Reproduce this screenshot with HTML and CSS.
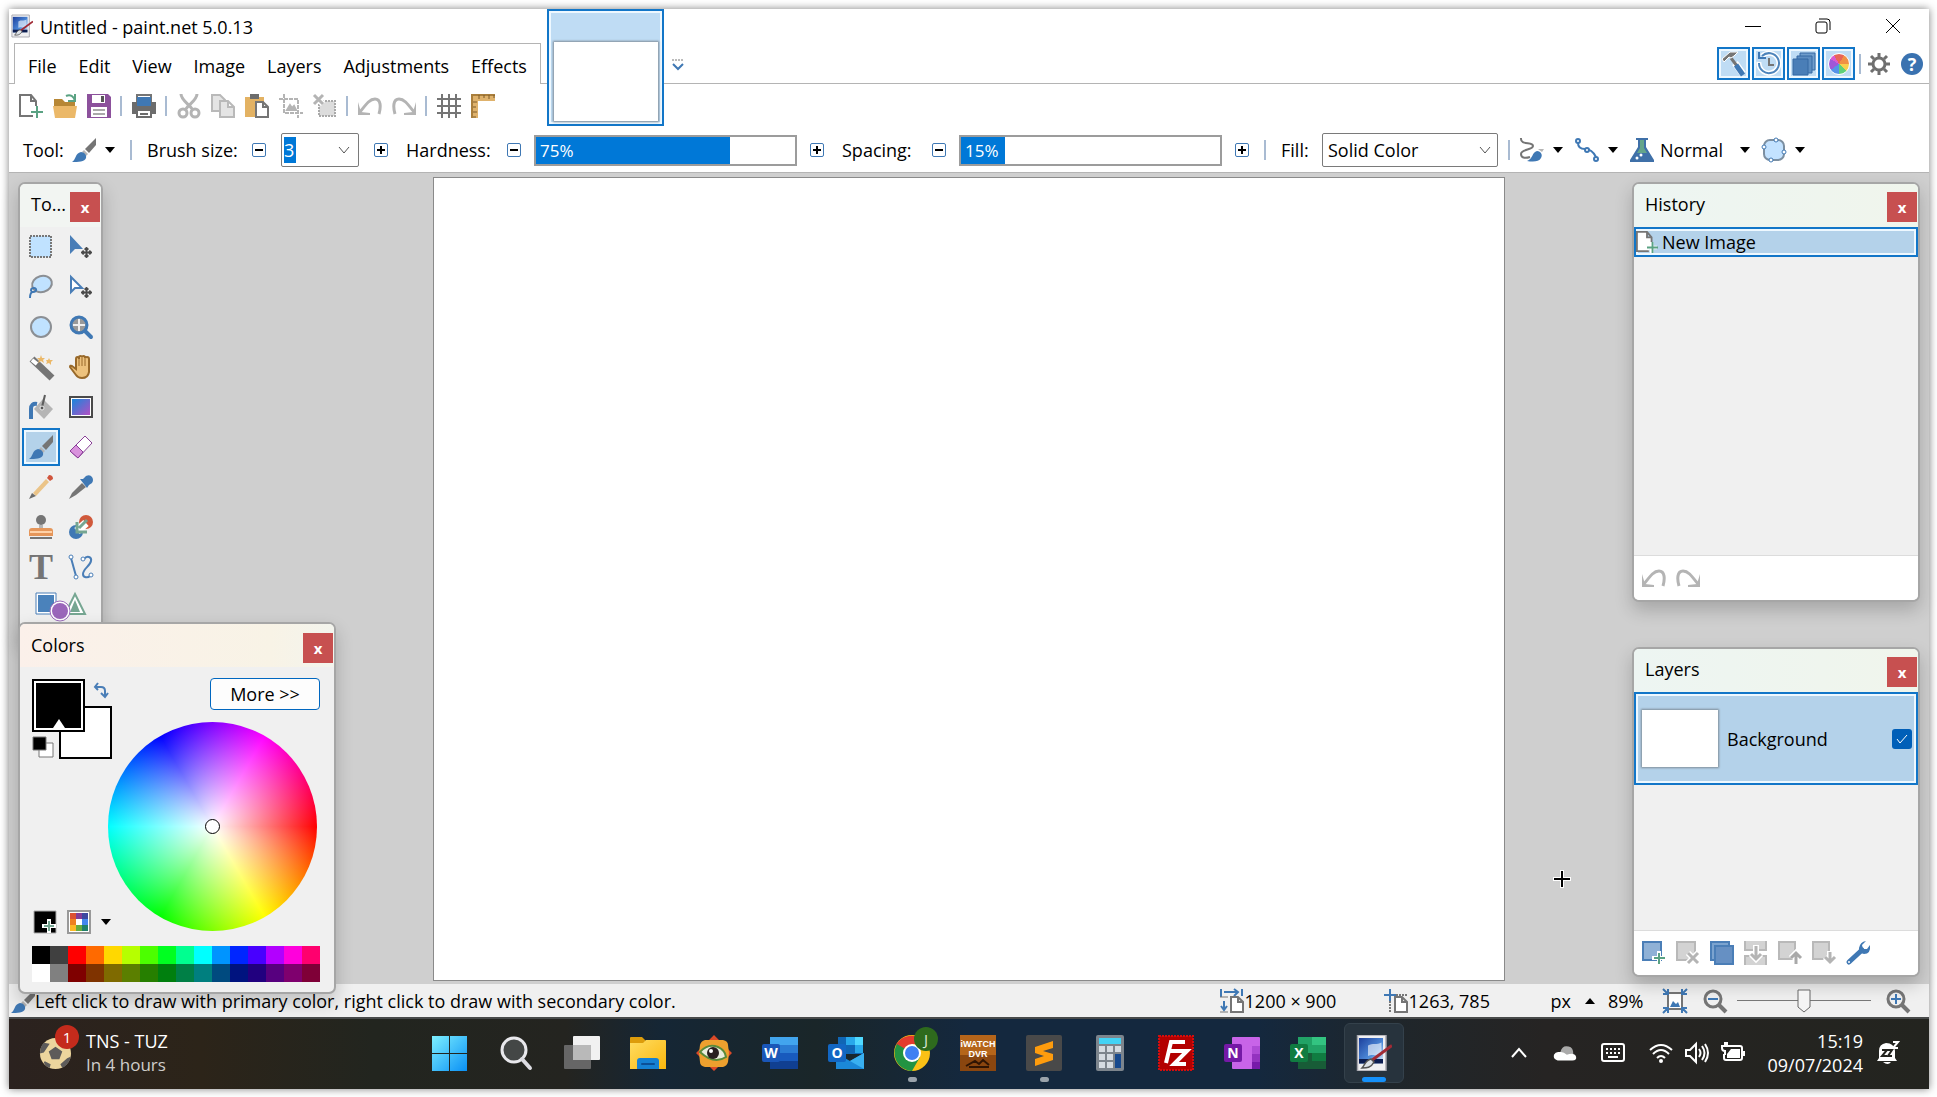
FILE: index.html
```html
<!DOCTYPE html>
<html lang="en">
  <head>
    <meta charset="utf-8">
    <title>Untitled - paint.net 5.0.13</title>
    <link rel="stylesheet" href="styles.css">
  </head>
  <body>
    <!-- shapes used more than once -->
    <svg class="defs" aria-hidden="true">
      <defs>
        <linearGradient id="sky" x1="0" y1="0" x2="1" y2="1">
          <stop offset="0" stop-color="#1c3f9c"></stop>
          <stop offset=".6" stop-color="#4f8ddb"></stop>
          <stop offset="1" stop-color="#e8f1fb"></stop>
        </linearGradient>
        <linearGradient id="violet" x1="0" y1="0" x2="1" y2="1">
          <stop offset="0" stop-color="#1787dc"></stop>
          <stop offset="1" stop-color="#b44fc4"></stop>
        </linearGradient>
        <linearGradient id="win" x1="0" y1="0" x2="1" y2="1">
          <stop offset="0" stop-color="#7df0ff"></stop>
          <stop offset="1" stop-color="#0a90f5"></stop>
        </linearGradient>
        <linearGradient id="gold" x1="0" y1="0" x2="1" y2="1">
          <stop offset="0" stop-color="#ffdd62"></stop>
          <stop offset="1" stop-color="#fbb60c"></stop>
        </linearGradient>
      </defs>
      <symbol id="brush" viewBox="0 0 24 24">
        <path d="M24 0v7l-7 8-4-4z" fill="#757575"></path>
        <path d="M12 12l4 4-2 2-4-4z" fill="#b5b5b5"></path>
        <path d="M9 14c3 0 6 3 5 6-1 4-8 4-14 4 4-2 3-9 9-10z" fill="#3f78b4"></path>
      </symbol>
      <symbol id="undo" viewBox="0 0 24 24">
        <path d="M2 18C9 9 12 5 17 5c6 0 6 8 4 15" fill="none" stroke="#b4b4b4" stroke-width="3"></path>
        <path d="M0 8v13h12v-2L3 18z" fill="#b4b4b4"></path>
      </symbol>
      <symbol id="redo" viewBox="0 0 24 24">
        <path d="M22 18C15 9 12 5 7 5c-6 0-6 8-4 15" fill="none" stroke="#b4b4b4" stroke-width="3"></path>
        <path d="M24 8v13H12v-2l9-1z" fill="#b4b4b4"></path>
      </symbol>
      <symbol id="newfile" viewBox="0 0 24 24">
        <path d="M14 22H1V1h11l5 6v8M12 1v6h5" fill="#fff" stroke="#757575" stroke-width="2"></path>
        <path d="M17 12v12M11 18h12" stroke="#fff" stroke-width="4"></path>
        <path d="M18 12v12M12 18h12" stroke="#5aa283" stroke-width="2"></path>
      </symbol>
      <symbol id="page" viewBox="0 0 24 24">
        <path d="M11 23V8h7l5 5v10zM18 8v5h5" fill="#fff" stroke="#757575" stroke-width="2"></path>
      </symbol>
      <symbol id="caret" viewBox="0 0 10 6"><path d="M0 0h10L5 6z"></path></symbol>
      <symbol id="chevron" viewBox="0 0 12 8"><path d="M1 1l5 6 5-6" fill="none" stroke="#555"></path></symbol>
      <symbol id="move" viewBox="0 0 12 12">
        <path d="M6 1v10M1 6h10M4 3l2-2 2 2M4 9l2 2 2-2M3 4L1 6l2 2M9 4l2 2-2 2" fill="none" stroke="#4a4a4a" stroke-width="2"></path>
      </symbol>
      <symbol id="pdn" viewBox="0 0 24 24">
        <path d="M1 0h19v24H1z" fill="#f0f0f2" stroke="#a5a5ad"></path>
        <path d="M2 2h16v17H2z" fill="url(#sky)"></path>
        <path d="M8 7c3-2 6 0 9-2v8c-4 2-5-1-9 1z" fill="#fff" opacity=".6"></path>
        <path d="M2 16h16v3H2z" fill="#0c1d50"></path>
        <path d="M24 7L9 18" stroke="#a12a35" stroke-width="2"></path>
        <path d="M10 16l2 2c-2 4-5 4-8 4 2-2 2-5 6-6z" fill="#dde2e8" stroke="#555"></path>
      </symbol>
    </svg>

    <div class="window">
      <header class="titlebar">
        <svg class="app-icon"><use href="#pdn"></use></svg>
        <h1>Untitled - paint.net 5.0.13</h1>
        <div class="window-buttons">
          <button aria-label="Minimize"><svg viewBox="0 0 16 16"><path d="M0 8.500h16"></path></svg></button>
          <button aria-label="Restore"><svg viewBox="0 0 16 16"><rect x="1" y="4" width="11" height="11" rx="2"></rect><path d="M4 1h8q3 0 3 3v8"></path></svg></button>
          <button aria-label="Close"><svg viewBox="0 0 16 16"><path d="M1 1l14 14M15 1L1 15"></path></svg></button>
        </div>
      </header>

      <div class="menu-row">
        <nav class="menu">
          <a href="#">File</a>
          <a href="#">Edit</a>
          <a href="#">View</a>
          <a href="#">Image</a>
          <a href="#">Layers</a>
          <a href="#">Adjustments</a>
          <a href="#">Effects</a>
        </nav>
        <button class="image-tab" aria-label="Untitled"><span></span></button>
        <button class="overflow" aria-label="Image list">
          <svg viewBox="0 0 12 12"><path d="M0 1h12" stroke="#777" stroke-dasharray="2 1"></path><path d="M1 5l5 5 5-5" fill="none" stroke="#3f78b4" stroke-width="2"></path></svg>
        </button>
        <div class="utility">
          <button class="toggle" aria-label="Tools">
            <svg class="icon" viewBox="0 0 24 24"><path d="M13 11l8 11" stroke="#fff" stroke-width="7"></path><path d="M9 6l6 8" stroke="#757575" stroke-width="3"></path><path d="M14 13l7 10" stroke="#3f78b4" stroke-width="5"></path><path d="M2 10l-2-3 8-7h8l-4 4-3 2-2-1z" fill="#757575" stroke="#fff"></path></svg>
          </button>
          <button class="toggle" aria-label="History">
            <svg class="icon" viewBox="0 0 24 24" fill="none"><path d="M5 4a10 10 0 1 1-3 6" stroke="#fff" stroke-width="5"></path><path d="M5 4a10 10 0 1 1-3 7" stroke="#4d84bb" stroke-width="2"></path><path d="M2 0v6h7" stroke="#3f78b4" stroke-width="2"></path><path d="M12 6v7h5" stroke="#757575" stroke-width="2"></path></svg>
          </button>
          <button class="toggle" aria-label="Layers">
            <svg class="icon" viewBox="0 0 24 24" fill="#6f9dcc" stroke="#3569a3"><path d="M8 1h15v17H8z"></path><path d="M5 4h15v17H5z" fill="#5c8dc1"></path><path d="M1 7h15v16H1z" fill="#4a7eb7"></path></svg>
          </button>
          <button class="toggle" aria-label="Colors">
            <span class="mini-wheel"></span>
          </button>
          <i class="sep"></i>
          <button class="plain" aria-label="Settings">
            <svg class="icon" viewBox="0 0 24 24" fill="none" stroke="#6f6f6f"><circle cx="12" cy="12" r="6" stroke-width="3"></circle><path d="M12 1v4M12 19v4M1 12h4M19 12h4M4 4l3 3M17 17l3 3M20 4l-3 3M4 20l3-3" stroke-width="3"></path></svg>
          </button>
          <button class="help" aria-label="Help">?</button>
        </div>
      </div>

      <div class="toolbar">
        <button aria-label="New"><svg class="icon"><use href="#newfile"></use></svg></button>
        <button aria-label="Open"><svg class="icon" viewBox="0 0 24 24"><path d="M1 5h8l3 3h10v4H1z" fill="#b78735"></path><path d="M0 12h24l-2 12H2z" fill="#ebb868"></path><path d="M13 2c4-2 8 0 9 5M22 0v7h-7" fill="none" stroke="#5aa283" stroke-width="2"></path></svg></button>
        <button aria-label="Save"><svg class="icon" viewBox="0 0 24 24"><path d="M0 0h21l3 3v21H0z" fill="#8c519c"></path><path d="M5 1h13v8H5zM4 13h16v10H4z" fill="#fff"></path><path d="M14 2h3v6h-3z" fill="#555"></path><path d="M6 16h12M6 20h12" stroke="#a9a9a9" stroke-width="2"></path></svg></button>
        <i class="sep"></i>
        <button aria-label="Print"><svg class="icon" viewBox="0 0 24 24"><path d="M5 1h14v8H5z" fill="#fff" stroke="#757575" stroke-width="2"></path><path d="M0 8h24v12H0z" fill="#6c6c6c"></path><path d="M5 3h14v9H5z" fill="#3f78b4"></path><path d="M5 16h14v7H5z" fill="#fff" stroke="#6c6c6c" stroke-width="2"></path><path d="M8 20h8" stroke="#6c6c6c" stroke-width="2"></path></svg></button>
        <i class="sep"></i>
        <button aria-label="Cut"><svg class="icon" viewBox="0 0 24 24" fill="none" stroke="#b4b4b4" stroke-width="3"><path d="M4 0c0 6 8 10 12 16M20 0c0 6-8 10-12 16"></path><circle cx="6" cy="19" r="4"></circle><circle cx="18" cy="19" r="4"></circle></svg></button>
        <button aria-label="Copy"><svg class="icon" viewBox="0 0 24 24" fill="#e4e4e4" stroke="#b9b9b9" stroke-width="2"><path d="M1 1h8l5 5v11H1z"></path><path d="M9 7h8l6 6v10H9zM17 7v6h6"></path></svg></button>
        <button aria-label="Paste"><svg class="icon" viewBox="0 0 24 24"><path d="M0 3h19v20H0z" fill="#e3b263"></path><path d="M5 0h9v5H5z" fill="#6c6c6c"></path><use href="#page"></use></svg></button>
        <button aria-label="Crop"><svg class="icon" viewBox="0 0 24 24" fill="none" stroke="#b4b4b4" stroke-width="2"><path d="M5 0v19h19M0 5h19v19" stroke-dasharray="4 1"></path><path d="M8 16l3-5 2 3 2-2 2 4z" fill="#b4b4b4"></path></svg></button>
        <button aria-label="Deselect"><svg class="icon" viewBox="0 0 24 24"><path d="M6 7h16v15H6z" fill="#dcdcdc" stroke="#a9a9a9" stroke-width="2" stroke-dasharray="2 1"></path><path d="M1 1l9 9M10 1l-9 9" stroke="#fff" stroke-width="6"></path><path d="M1 1l9 9M10 1l-9 9" stroke="#b4b4b4" stroke-width="3"></path></svg></button>
        <i class="sep"></i>
        <button aria-label="Undo"><svg class="icon"><use href="#undo"></use></svg></button>
        <button aria-label="Redo"><svg class="icon"><use href="#redo"></use></svg></button>
        <i class="sep"></i>
        <button aria-label="Pixel grid"><svg class="icon" viewBox="0 0 24 24"><path d="M5 0v24M12 0v24M19 0v24M0 5h24M0 12h24M0 19h24" stroke="#757575" stroke-width="2"></path></svg></button>
        <button aria-label="Rulers"><svg class="icon" viewBox="0 0 24 24"><path d="M0 0h24v7H7v17H0z" fill="#dfb26c"></path><path d="M1 24V1h23" fill="none" stroke="#a97e3c" stroke-width="2"></path><path d="M8 1v4M13 1v3M18 1v4M23 1v3M2 8h4M2 13h3M2 18h4M2 23h3" stroke="#7c5a28" stroke-width="1"></path></svg></button>
      </div>

      <div class="options">
        <span class="tool-label">Tool:</span>
        <button class="drop" aria-label="Paintbrush"><svg class="icon"><use href="#brush"></use></svg><svg class="caret"><use href="#caret"></use></svg></button>
        <i class="sep"></i>
        <label class="size-label" for="size">Brush size:</label>
        <button class="step" aria-label="Smaller brush"><svg viewBox="0 0 10 10"><path d="M1 5h8"></path></svg></button>
        <div class="combo">
          <input id="size" type="text" value="3">
          <button aria-label="Brush sizes"><svg class="chevron"><use href="#chevron"></use></svg></button>
        </div>
        <button class="step" aria-label="Larger brush"><svg viewBox="0 0 10 10"><path d="M1 5h8M5 1v8"></path></svg></button>
        <label class="hardness-label" for="hardness">Hardness:</label>
        <button class="step" aria-label="Softer"><svg viewBox="0 0 10 10"><path d="M1 5h8"></path></svg></button>
        <div class="bar">
          <input id="hardness" type="range" value="75" style="--value: 75%">
          <output for="hardness">75%</output>
        </div>
        <button class="step" aria-label="Harder"><svg viewBox="0 0 10 10"><path d="M1 5h8M5 1v8"></path></svg></button>
        <label class="spacing-label" for="spacing">Spacing:</label>
        <button class="step" aria-label="Less spacing"><svg viewBox="0 0 10 10"><path d="M1 5h8"></path></svg></button>
        <div class="bar">
          <input id="spacing" type="range" value="15" style="--value: 17%">
          <output for="spacing">15%</output>
        </div>
        <button class="step" aria-label="More spacing"><svg viewBox="0 0 10 10"><path d="M1 5h8M5 1v8"></path></svg></button>
        <i class="sep"></i>
        <label class="fill-label" for="fill">Fill:</label>
        <div class="select">
          <select id="fill"><option>Solid Color</option></select>
          <svg class="chevron"><use href="#chevron"></use></svg>
        </div>
        <i class="sep"></i>
        <button class="drop" aria-label="Smoothing"><svg class="icon" viewBox="0 0 24 24"><path d="M1 0c-1 8 12 3 12 8 0 4-12 3-12 8 0 5 6 4 9 3" fill="none" stroke="#757575" stroke-width="2"></path><path d="M18 11l4 3 2-3-3 0z" fill="#b5b5b5"></path><path d="M17 13c4 0 6 4 4 7-2 4-8 4-14 3 6-2 5-9 10-10z" fill="#3f78b4"></path></svg><svg class="caret"><use href="#caret"></use></svg></button>
        <button class="drop" aria-label="Curve"><svg class="icon" viewBox="0 0 24 24" fill="none" stroke="#3f78b4" stroke-width="2"><path d="M3 5c0 5 3 6 7 6s8 2 11 8"></path><circle cx="3" cy="3" r="2" fill="#fff"></circle><circle cx="12" cy="12" r="2" fill="#fff"></circle><circle cx="21" cy="21" r="2" fill="#fff"></circle></svg><svg class="caret"><use href="#caret"></use></svg></button>
        <button class="drop blend"><svg class="icon" viewBox="0 0 24 24"><path d="M6 0h12v2h-2v7l8 13v2H0v-2L8 9V2H6z" fill="#3f70a8"></path><path d="M10 2h4v8l3 5H7l3-5z" fill="#64a58b"></path><circle cx="7" cy="20" r="1.500" fill="#fff"></circle><circle cx="11" cy="17" r="1.500" fill="#fff"></circle></svg><span>Normal</span><svg class="caret"><use href="#caret"></use></svg></button>
        <button class="drop" aria-label="Selection clipping"><svg class="icon" viewBox="0 0 24 24"><rect x="2" y="2" width="20" height="20" rx="6" fill="#c3e2ff" stroke="#7c8fa1" stroke-width="2"></rect><g fill="#fff" stroke="#3f78b4"><circle cx="14" cy="2" r="2"></circle><circle cx="22" cy="14" r="2"></circle><circle cx="2" cy="9" r="2"></circle><circle cx="9" cy="22" r="2"></circle></g></svg><svg class="caret"><use href="#caret"></use></svg></button>
      </div>

      <main class="workspace">
        <div class="canvas"></div>
        <svg class="cursor" viewBox="0 0 18 18"><path d="M9 0v18M0 9h18" stroke="#fff" stroke-width="4"></path><path d="M9 1v16M1 9h16" stroke="#000" stroke-width="2"></path></svg>

        <section class="panel tools">
          <header><h2>To...</h2><button class="close" aria-label="Close tools">x</button></header>
          <div class="tool-grid">
            <button aria-label="Rectangle select"><svg class="icon" viewBox="0 0 24 24"><path d="M1 1h21v21H1z" fill="#c0e2ff" stroke="#777" stroke-width="2" stroke-dasharray="2 1"></path></svg></button>
            <button aria-label="Move selected pixels"><svg class="icon" viewBox="0 0 24 24"><path d="M1 0v19l5-5h8z" fill="#4a7eb7"></path><use href="#move" x="12" y="12" width="11" height="11"></use></svg></button>
            <button aria-label="Lasso select"><svg class="icon" viewBox="0 0 24 24"><ellipse cx="13" cy="9" rx="10" ry="8" transform="rotate(-15 13 9)" fill="#c0e2ff" stroke="#8b8f94" stroke-width="2"></ellipse><path d="M1 23c0-4 1-6 3-6 4 0 4-4 1-4s-4 2-2 4" fill="none" stroke="#3f78b4" stroke-width="2"></path></svg></button>
            <button aria-label="Move selection"><svg class="icon" viewBox="0 0 24 24"><path d="M2 2v15l4-4h7z" fill="#fff" stroke="#4a7eb7" stroke-width="2"></path><use href="#move" x="12" y="12" width="11" height="11"></use></svg></button>
            <button aria-label="Ellipse select"><svg class="icon" viewBox="0 0 24 24"><circle cx="12" cy="12" r="10" fill="#c0e2ff" stroke="#8b8f94" stroke-width="2"></circle></svg></button>
            <button aria-label="Zoom"><svg class="icon" viewBox="0 0 24 24"><path d="M15 15l7 7" stroke="#3f78b4" stroke-width="4" stroke-linecap="round"></path><circle cx="10" cy="10" r="8" fill="#999" stroke="#3f78b4" stroke-width="3"></circle><path d="M10 4v12M4 10h12" stroke="#eee" stroke-width="2"></path></svg></button>
            <button aria-label="Magic wand"><svg class="icon" viewBox="0 0 24 24"><path d="M3 4l20 19" stroke="#757575" stroke-width="7"></path><path d="M3 5l5 4" stroke="#fff" stroke-width="4"></path><path d="M12 0l1 3 3 0-2 2 1 3-3-2-3 2 1-3-2-2 3 0zM20 3l1 2 3 0-2 2 0 3-2-2-3 1 1-2-1-2 2 0z" fill="#ebb868"></path></svg></button>
            <button aria-label="Pan"><svg class="icon" viewBox="0 0 24 24"><path d="M7 14V4q0-2 1.500-2T10 4V2q0-1 1.500-1T13 2q0-1 1.500-1T16 3q0-1 2-1t2 2v13q-1 6-7 6-4 0-6-3l-6-8q0-2 2-1z" fill="#edc27d" stroke="#98692a" stroke-width="2"></path><path d="M10 3v8M13 2v9M16 3v8" stroke="#98692a"></path></svg></button>
            <button aria-label="Paint bucket"><svg class="icon" viewBox="0 0 24 24"><path d="M14 4l10 10-9 10L5 14z" fill="#b5b5b5"></path><path d="M2 24V14q0-6 6-5" fill="none" stroke="#3f78b4" stroke-width="4"></path><path d="M16 0l-3 12" stroke="#5d5d5d" stroke-width="2"></path><circle cx="13" cy="13" r="2" fill="#555" stroke="#eee"></circle></svg></button>
            <button aria-label="Gradient"><svg class="icon" viewBox="0 0 24 24"><rect x="1" y="2" width="22" height="20" fill="#fff" stroke="#4a4a4a" stroke-width="2"></rect><path d="M3 4h18v16H3z" fill="url(#violet)"></path></svg></button>
            <button class="active" aria-label="Paintbrush"><svg class="icon"><use href="#brush"></use></svg></button>
            <button aria-label="Eraser"><svg class="icon" viewBox="0 0 24 24" stroke="#8a3f98" stroke-width="1"><path d="M16 1l7 7L9 23l-8-7z" fill="#fff"></path><path d="M7 10l7 7-5 6-8-7z" fill="#d992dd"></path></svg></button>
            <button aria-label="Pencil"><svg class="icon" viewBox="0 0 24 24"><path d="M4 18L17 4l3 3L7 21z" fill="#ebc488"></path><path d="M18 3l2-3q4 0 4 4l-3 2z" fill="#d0553d"></path><path d="M0 24l3-6 4 3z" fill="#6c6c6c"></path></svg></button>
            <button aria-label="Color picker"><svg class="icon" viewBox="0 0 24 24"><path d="M0 24l3-6L13 8l4 4L7 20z" fill="#757575"></path><path d="M11 4l3 0 3-3q4-2 6 1t0 6l-3 2-2 3z" fill="#3f78b4"></path></svg></button>
            <button aria-label="Clone stamp"><svg class="icon" viewBox="0 0 24 24"><circle cx="12" cy="5" r="5" fill="#757575"></circle><path d="M10 10h4v5h-4z" fill="#b5b5b5"></path><path d="M3 13h18q3 0 3 3v5H0v-5q0-3 3-3z" fill="#e5965a"></path><path d="M1 17h22" stroke="#ffd2a8" stroke-width="2"></path><path d="M1 23h22" stroke="#757575" stroke-width="2"></path></svg></button>
            <button aria-label="Recolor"><svg class="icon" viewBox="0 0 24 24"><circle cx="7" cy="17" r="7" fill="#3f78b4"></circle><circle cx="17" cy="7" r="7" fill="#d0593b"></circle><path d="M17 8L8 16" stroke="#fff" stroke-width="8"></path><path d="M18 5l-8 8M8 7v10h10" fill="none" stroke="#76a692" stroke-width="3"></path></svg></button>
            <button class="letter" aria-label="Text">T</button>
            <button aria-label="Line / curve"><svg class="icon" viewBox="0 0 24 24" fill="none" stroke="#4a7eb7" stroke-width="2"><path d="M2 3l5 18"></path><path d="M15 4c3-4 8-2 7 2-1 5-8 8-8 13 0 4 5 4 7 2"></path><g fill="#fff" stroke-width="1"><circle cx="2" cy="2" r="2"></circle><circle cx="7" cy="22" r="2"></circle><circle cx="14" cy="4" r="2"></circle><circle cx="22" cy="20" r="2"></circle></g></svg></button>
            <button class="shapes" aria-label="Shapes"><svg viewBox="0 0 52 30"><path d="M1 1h20v21H1z" fill="#fff" stroke="#4a7eb7"></path><path d="M3 3h16v17H3z" fill="#4a82bb"></path><path d="M40 2l10 20H30z" fill="#fff" stroke="#76a692" stroke-width="2"></path><path d="M40 8l5 12H35z" fill="#76a692"></path><circle cx="25" cy="19" r="10" fill="#fff" stroke="#9a6bbb"></circle><circle cx="25" cy="19" r="8" fill="#9a66ba"></circle></svg></button>
          </div>
        </section>

        <section class="panel history">
          <header><h2>History</h2><button class="close" aria-label="Close history">x</button></header>
          <div class="panel-body">
            <div class="history-item"><svg class="icon"><use href="#newfile"></use></svg>New Image</div>
          </div>
          <footer>
            <button aria-label="Undo"><svg class="icon"><use href="#undo"></use></svg></button>
            <button aria-label="Redo"><svg class="icon"><use href="#redo"></use></svg></button>
          </footer>
        </section>

        <section class="panel layers">
          <header><h2>Layers</h2><button class="close" aria-label="Close layers">x</button></header>
          <div class="panel-body">
            <div class="layer">
              <span class="thumb"></span>
              <label for="background">Background</label>
              <input id="background" type="checkbox" checked>
              <svg class="tick" viewBox="0 0 12 12"><path d="M1 6l3 4 7-8" fill="none" stroke="#fff"></path></svg>
            </div>
          </div>
          <footer>
            <button aria-label="Add layer"><svg class="icon" viewBox="0 0 24 24"><path d="M1 1h18v18H1z" fill="#8fb1d6" stroke="#4a7eb7" stroke-width="2"></path><path d="M17 10v14M10 17h14" stroke="#fff" stroke-width="4"></path><path d="M17 12v11M12 17h11" stroke="#5aa283" stroke-width="2"></path></svg></button>
            <button aria-label="Delete layer"><svg class="icon" viewBox="0 0 24 24"><path d="M1 1h18v18H1z" fill="#d3d3d3" stroke="#b9b9b9" stroke-width="2"></path><path d="M12 12l10 10M22 12L12 22" stroke="#fff" stroke-width="6"></path><path d="M12 12l10 10M22 12L12 22" stroke="#b4b4b4" stroke-width="3"></path></svg></button>
            <button aria-label="Duplicate layer"><svg class="icon" viewBox="0 0 24 24" stroke="#4a7eb7" stroke-width="2"><path d="M1 1h18v18H1z" fill="#7ba3cf"></path><path d="M5 5h18v18H5z" fill="#6690c3"></path></svg></button>
            <button aria-label="Merge down"><svg class="icon" viewBox="0 0 24 24"><path d="M1 0v9h21V0M1 24v-9h21v9" fill="#d3d3d3" stroke="#b9b9b9" stroke-width="2"></path><path d="M12 4v14M7 13l5 5 5-5" fill="none" stroke="#fff" stroke-width="6"></path><path d="M12 5v13M7 13l5 5 5-5" fill="none" stroke="#b4b4b4" stroke-width="3"></path></svg></button>
            <button aria-label="Move layer up"><svg class="icon" viewBox="0 0 24 24"><path d="M1 1h16v17H1z" fill="#d3d3d3" stroke="#b9b9b9" stroke-width="2"></path><path d="M18 24V11M13 17l5-5 5 5" fill="none" stroke="#fff" stroke-width="6"></path><path d="M18 23V12M13 17l5-5 5 5" fill="none" stroke="#a9a9a9" stroke-width="3"></path></svg></button>
            <button aria-label="Move layer down"><svg class="icon" viewBox="0 0 24 24"><path d="M1 1h16v17H1z" fill="#d3d3d3" stroke="#b9b9b9" stroke-width="2"></path><path d="M18 10v12M13 16l5 5 5-5" fill="none" stroke="#fff" stroke-width="6"></path><path d="M18 11v10M13 16l5 5 5-5" fill="none" stroke="#b4b4b4" stroke-width="3"></path></svg></button>
            <button aria-label="Layer properties"><svg class="icon" viewBox="0 0 24 24"><path d="M3 21L16 9" stroke="#3f78b4" stroke-width="5" stroke-linecap="round"></path><path d="M20 0l-4 4 1 4 4 0 3-4q1 9-6 9-6-1-5-6 1-6 7-7z" fill="#3f78b4"></path><circle cx="3" cy="21" r="1" fill="#fff"></circle></svg></button>
          </footer>
        </section>

        <section class="panel colors">
          <header><h2>Colors</h2><button class="close" aria-label="Close colors">x</button></header>
          <div class="colors-top">
            <div class="swatches">
              <button class="secondary" aria-label="Secondary color"></button>
              <button class="primary" aria-label="Primary color"></button>
              <button class="reset" aria-label="Reset colors"><svg viewBox="0 0 22 22"><path d="M7 7h14v14H7z" fill="#fff" stroke="#777"></path><path d="M1 1h13v13H1z" stroke="#777"></path></svg></button>
              <button class="swap" aria-label="Swap colors"><svg viewBox="0 0 16 16" fill="none" stroke="#4a7eb7" stroke-width="2"><path d="M2 5h6q4 0 4 4v5M5 1L2 5l3 3M8 11l4 4 3-4"></path></svg></button>
            </div>
            <button class="more">More &gt;&gt;</button>
          </div>
          <div class="wheel"><i></i></div>
          <div class="palette-tools">
            <button aria-label="Add color"><svg class="icon" viewBox="0 0 24 24"><path d="M1 1h22v22H1z" stroke="#aaa"></path><path d="M16 9v14M9 16h14" stroke="#fff" stroke-width="4"></path><path d="M16 11v10M11 16h10" stroke="#76a692" stroke-width="2"></path></svg></button>
            <button aria-label="Palettes"><svg class="icon" viewBox="0 0 24 24"><rect x="1" y="1" width="22" height="22" fill="#fff" stroke="#999" stroke-width="2"></rect><path d="M3 3h6v6H3z" fill="#dc5033"></path><path d="M9 3h6v6H9z" fill="#833c98"></path><path d="M15 3h6v6h-6z" fill="#3c48a0"></path><path d="M3 9h6v6H3z" fill="#ee8122"></path><path d="M15 9h6v6h-6z" fill="#4486ee"></path><path d="M3 15h6v6H3z" fill="#fcb926"></path><path d="M9 15h6v6H9z" fill="#69ab3f"></path><path d="M15 15h6v6h-6z" fill="#21806a"></path></svg></button>
            <button aria-label="Palette menu"><svg class="caret"><use href="#caret"></use></svg></button>
          </div>
          <div class="palette" id="palette"></div>
        </section>
      </main>

      <div class="statusbar">
        <svg class="icon"><use href="#brush"></use></svg>
        <span class="hint">Left click to draw with primary color, right click to draw with secondary color.</span>
        <span class="info"><svg class="icon" viewBox="0 0 24 24"><path d="M1 0v7h-1M22 0v7M4 3h14M14 0l4 3-4 4M4 12v8M1 17l3 4 3-4" fill="none" stroke="#3f78b4" stroke-width="2"></path><path d="M0 8h8M0 23h8" stroke="#777"></path><use href="#page"></use></svg>1200 × 900</span>
        <span class="info position"><svg class="icon" viewBox="0 0 24 24"><path d="M6 0v12M0 6h12" stroke="#3f78b4" stroke-width="2"></path><path d="M6 12v12M12 6h12" stroke="#777" stroke-width="2" stroke-dasharray="2 1"></path><use href="#page"></use></svg>1263, 785</span>
        <button class="unit">px<svg viewBox="0 0 10 6"><path d="M0 6h10L5 0z"></path></svg></button>
        <span class="percent">89%</span>
        <button aria-label="Fit to window"><svg class="icon" viewBox="0 0 24 24"><path d="M5 4h14v16H5z" fill="#fff" stroke="#757575" stroke-width="2"></path><path d="M7 18l3-6 3 3 2-2 2 5z" fill="#3f78b4"></path><path d="M0 0l5 5M24 0l-5 5M0 24l5-5M24 24l-5-5M0 5h5V0M24 5h-5V0M0 19h5v5M24 19h-5v5" fill="none" stroke="#3f78b4" stroke-width="2"></path></svg></button>
        <button class="zoom-out" aria-label="Zoom out"><svg class="icon" viewBox="0 0 24 24"><path d="M15 15l8 8" stroke="#757575" stroke-width="4"></path><circle cx="10" cy="10" r="8" fill="#f0f0f0" stroke="#757575" stroke-width="3"></circle><path d="M5 10h10" stroke="#3f78b4" stroke-width="2"></path></svg></button>
        <div class="zoom-slider"><input type="range" aria-label="Zoom"><svg viewBox="0 0 14 24"><path d="M1 1h12v17l-6 5-6-5z" fill="#f4f4f4" stroke="#666"></path></svg></div>
        <button aria-label="Zoom in"><svg class="icon" viewBox="0 0 24 24"><path d="M15 15l8 8" stroke="#757575" stroke-width="4"></path><circle cx="10" cy="10" r="8" fill="#f0f0f0" stroke="#757575" stroke-width="3"></circle><path d="M5 10h10M10 5v10" stroke="#3f78b4" stroke-width="2"></path></svg></button>
      </div>

      <div class="taskbar">
        <button class="widget">
          <span class="ball">
            <svg viewBox="0 0 34 34"><circle cx="17" cy="17" r="16" fill="#ecd59d"></circle><path d="M17 10l7 5-3 8h-8l-3-8zM5 6l6 1-6 9-4 1q0-7 4-11zM29 22l4-2q-2 8-9 12l-2-4zM6 25l6 3-1 4q-5-2-6-6z" fill="#5d5b5a"></path></svg>
            <b>1</b>
          </span>
          <span class="widget-text">TNS - TUZ<small>In 4 hours</small></span>
        </button>
        <div class="apps">
          <button aria-label="Start"><svg viewBox="0 0 36 36" fill="url(#win)"><path d="M0 1h17v17H0zM18 1h17v17H18zM0 19h17v17H0zM18 19h17v17H18z"></path></svg></button>
          <button aria-label="Search"><svg viewBox="0 0 36 36"><circle cx="16" cy="15" r="12" fill="#444746" stroke="#e8e8ec" stroke-width="3"></circle><path d="M24 24l8 9" stroke="#dcdce2" stroke-width="4" stroke-linecap="round"></path></svg></button>
          <button aria-label="Task view"><svg viewBox="0 0 36 36"><rect y="10" width="27" height="24" rx="1" fill="#666"></rect><rect x="9" y="1" width="27" height="24" rx="1" fill="#f1f1f1"></rect><path d="M9 10h18v15H9z" fill="#b9b9b9"></path></svg></button>
          <button aria-label="Files"><svg viewBox="0 0 36 36"><path d="M0 3q0-1 1-1h11l4 4v4H0z" fill="#dd9c0b"></path><path d="M0 8h13l3-3h19q1 0 1 1v28H0z" fill="url(#gold)"></path><path d="M7 34V26q0-3 3-3h16q3 0 3 3v8z" fill="#1580d2"></path><path d="M12 29h12" stroke="#0b4f96" stroke-width="2" stroke-linecap="round"></path></svg></button>
          <button aria-label="Viewer"><svg viewBox="0 0 36 36"><path d="M18 0l6 6h-12zM36 18l-6 6V12zM18 36l-6-6h12zM0 18l6-6v12z" fill="#dc4a28"></path><path d="M9 5h18q5 1 5 5l1 8-1 9q-1 4-5 5H9q-5-1-5-5l-1-9 1-8q1-4 5-5z" fill="#eda02e"></path><path d="M4 17Q12 8 22 12q7 3 8 10-12 8-26-5z" fill="#e9ecdc" stroke="#5a8a3a" stroke-width="2"></path><circle cx="17" cy="18" r="6" fill="#29201f"></circle><circle cx="15" cy="16" r="2" fill="#fff"></circle></svg></button>
          <button aria-label="Word"><svg viewBox="0 0 36 36"><path d="M8 2h28v8H8z" fill="#42a5ee"></path><path d="M8 10h28v8H8z" fill="#2b7cd3"></path><path d="M8 18h28v8H8z" fill="#185abd"></path><path d="M8 26h28v8H8z" fill="#103f91"></path><rect y="9" width="18" height="18" rx="2" fill="#1a56b8"></rect><text x="9" y="23" class="logo">W</text></svg></button>
          <button aria-label="Outlook"><svg viewBox="0 0 36 36"><path d="M10 2h25v17H10z" fill="#1066b5"></path><path d="M18 2h9v8h-9zM27 10h8v8h-8z" fill="#28a8ea"></path><path d="M27 2h8v8h-8z" fill="#50d9ff"></path><path d="M8 18l14 8 14-8v16H8z" fill="#1b88d8"></path><path d="M22 26l14-8v16z" fill="#39b0f0"></path><rect y="9" width="18" height="18" rx="2" fill="#1267c4"></rect><text x="9" y="23" class="logo">O</text></svg></button>
          <button class="running" aria-label="Chrome"><svg viewBox="0 0 36 36"><circle cx="18" cy="18" r="18" fill="#fbc116"></circle><path d="M18 18L2 10A18 18 0 0 1 33 9H18z" fill="#e33b2e"></path><path d="M18 18l-15-9a18 18 0 0 0 15 27l8-14z" fill="#229342"></path><circle cx="18" cy="18" r="9" fill="#fff"></circle><circle cx="18" cy="18" r="7" fill="#3f80f2"></circle></svg><b class="avatar">J</b></button>
          <button aria-label="Watch DVR"><svg viewBox="0 0 36 36"><path d="M0 0h36v36H0z" fill="#b5651a"></path><path d="M0 20h36v16H0z" fill="#8a460f"></path><text x="18" y="12" class="dvr">iWATCH</text><text x="18" y="22" class="dvr">DVR</text><path d="M6 31l9-5 4 3 4-4 6 5M9 32h20" fill="none" stroke="#301503" stroke-width="2"></path></svg></button>
          <button class="running" aria-label="Sublime Text"><svg viewBox="0 0 36 36"><rect width="36" height="36" rx="2" fill="#494949"></rect><path d="M9 12l18-6v7l-10 3 10 3v6L9 31v-7l9-3-9-3z" fill="#ff9c0d"></path></svg></button>
          <button aria-label="Calculator"><svg viewBox="0 0 36 36"><rect x="4" width="28" height="36" rx="2" fill="#7d858d"></rect><path d="M7 3h22v6H7z" fill="#43d3f5"></path><path d="M7 11h6v6H7zM15 11h6v6h-6zM23 11h6v6h-6zM7 19h6v6H7zM15 19h6v6h-6zM7 27h6v6H7zM15 27h6v6h-6z" fill="#d6dce2"></path><path d="M23 19h6v14h-6z" fill="#184a8e"></path></svg></button>
          <button aria-label="FileZilla"><svg viewBox="0 0 36 36"><path d="M1 1h34v34H1z" fill="#b30000" stroke="#d60d0d" stroke-width="2" stroke-dasharray="2 1"></path><path d="M8 28l5-21h14M11 16h10M17 16h12L16 29h12" fill="none" stroke="#fff" stroke-width="4"></path></svg></button>
          <button aria-label="OneNote"><svg viewBox="0 0 36 36"><rect x="8" y="2" width="28" height="32" rx="1" fill="#c864e8"></rect><path d="M28 11h8v8h-8z" fill="#ae4bd5"></path><path d="M28 19h8v8h-8z" fill="#9332bf"></path><path d="M28 27h8v7h-8z" fill="#7719aa"></path><rect y="9" width="18" height="18" rx="2" fill="#7519a6"></rect><text x="9" y="23" class="logo">N</text></svg></button>
          <button aria-label="Excel"><svg viewBox="0 0 36 36"><path d="M8 2h28v32H8z" fill="#21a366"></path><path d="M22 2h14v8H22z" fill="#33c481"></path><path d="M22 18h14v8H22z" fill="#107c41"></path><path d="M8 18h14v16H8zM22 26h14v8H22z" fill="#185c37"></path><rect y="9" width="18" height="18" rx="2" fill="#107c41"></rect><text x="9" y="23" class="logo">X</text></svg></button>
          <button class="current" aria-label="paint.net"><svg><use href="#pdn"></use></svg></button>
        </div>
        <div class="tray">
          <button class="up" aria-label="Hidden icons"><svg viewBox="0 0 24 24"><path d="M5 16l7-8 7 8"></path></svg></button>
          <button class="cloud" aria-label="OneDrive"><svg viewBox="0 0 26 24"><path d="M8 11q2-8 9-6 5 1 5 8l-12 4z" class="shade"></path><path d="M5 20q-5-1-4-6 2-4 6-3 4-1 8 3 8-3 10 2 1 4-4 4z" class="solid"></path></svg></button>
          <button class="keyboard" aria-label="Keyboard"><svg viewBox="0 0 24 24"><rect x="1" y="3" width="22" height="17" rx="2"></rect><path d="M5 8h14M5 12h14" stroke-dasharray="2 2"></path><path d="M7 16h10"></path></svg></button>
          <button class="status" aria-label="Network, volume, battery">
            <svg viewBox="0 0 24 24"><path d="M1 9q11-10 22 0M4 13q8-8 16 0M8 17q4-4 8 0"></path><circle cx="12" cy="20" r="2" class="solid"></circle></svg>
            <svg viewBox="0 0 24 24"><path d="M1 9h4l6-6v18l-6-6H1zM14 8q3 4 0 8M17 5q5 7 0 14M20 3q6 9 0 18"></path></svg>
            <svg viewBox="0 0 24 24"><path d="M8 5h11q2 0 2 2v10q0 2-2 2H5q-2 0-2-2v-4M23 10v5"></path><path d="M10 8h9v9H6v-4z" class="solid"></path><path d="M4 1v4h-3l0 2q0 3 3 3v4M1 5h7M6 1v4"></path></svg>
          </button>
          <button class="clock">15:19<br>09/07/2024</button>
          <button class="bell" aria-label="Notifications"><svg viewBox="0 0 24 24"><path d="M4 17V10q0-7 7-8 8 0 9 8v7l2 3H2zM8 21h8q-3 4-8 0z" class="solid"></path><path d="M7 9h5l-5 6h5M13 9h4l-4 6h4" stroke="#24241f" class="zz"></path><path d="M18 1h5l-5 6h5"></path></svg></button>
        </div>
      </div>
    </div>

    <script>
      // two rows of sixteen, bright on top and dark below
      var colors = [
        '#000000', '#404040', '#ff0000', '#ff6a00', '#ffd800', '#b6ff00', '#4cff00', '#00ff21',
        '#00ff90', '#00ffff', '#0094ff', '#0026ff', '#4800ff', '#b200ff', '#ff00dc', '#ff006e',
        '#ffffff', '#808080', '#7f0000', '#7f3300', '#7f6a00', '#5b7f00', '#267f00', '#007f0e',
        '#007f46', '#007f7f', '#004a7f', '#00137f', '#21007f', '#57007f', '#7f006e', '#7f0037'
      ]
      var palette = document.getElementById('palette')

      colors.forEach((color) => {
        var cell = document.createElement('button')
        cell.style.backgroundColor = color
        cell.setAttribute('aria-label', color)
        palette.appendChild(cell)
      })
    </script>
  </body>
</html>
```
FILE: styles.css
```css
* {
  box-sizing: border-box;
}
body {
  margin: 0;
  padding: 9px 8px 8px 9px;
  background: #fff;
  color: #000;
  font: 18px/24px "Open Sans", "Noto Sans", sans-serif;
}
button, input, select {
  margin: 0;
  padding: 0;
  border: 0;
  background: none;
  color: inherit;
  font: inherit;
}
button {
  display: flex;
  flex-shrink: 0;
  align-items: center;
  justify-content: center;
}
h1, h2 {
  margin: 0;
  font-size: 18px;
  font-weight: normal;
}
svg {
  display: block;
  flex-shrink: 0;
  overflow: visible;
}
.defs {
  position: absolute;
  width: 0;
  height: 0;
}
.icon {
  width: 24px;
  height: 24px;
}
.caret {
  width: 10px;
  height: 6px;
}
.chevron {
  width: 12px;
  height: 8px;
}
.sep {
  flex-shrink: 0;
  width: 2px;
  height: 20px;
  background: #a9bbd2;
}
.window {
  display: flex;
  flex-direction: column;
  min-height: calc(100vh - 17px);
  background: #fff;
  box-shadow: 0 0 8px rgba(0, 0, 0, .5);
}

/* title and menu */
.titlebar {
  display: flex;
  align-items: center;
  height: 34px;
  padding-left: 2px;
}
.titlebar h1 {
  padding-top: 2px;
}
.app-icon {
  width: 22px;
  height: 24px;
  margin-right: 7px;
}
.window-buttons {
  display: flex;
  margin-left: auto;
}
.window-buttons button {
  width: 70px;
  height: 34px;
}
.window-buttons button:last-child {
  margin-right: 1px;
}
.window-buttons svg {
  width: 16px;
  height: 16px;
  fill: none;
  stroke: #000;
  stroke-width: 1;
}
.menu-row {
  position: relative;
  display: flex;
  height: 41px;
  padding-left: 5px;
  border-bottom: 1px solid #b4b4b4;
}
.menu {
  display: flex;
  align-items: center;
  justify-content: space-between;
  width: 527px;
  height: 41px;
  padding: 4px 13px 0;
  border: 1px solid #b4b4b4;
  border-bottom: 0;
  background: #fff;
}
.menu a {
  color: #000;
  text-decoration: none;
}
.image-tab {
  position: absolute;
  top: -34px;
  left: 538px;
  width: 117px;
  height: 117px;
  padding: 0 1px 3px;
  align-items: flex-end;
  border: 2px solid #1276c8;
  background: #bfdcf4;
  box-shadow: inset 0 0 0 2px #eef8ff;
}
.image-tab span {
  width: 104px;
  height: 79px;
  background: #fff;
  box-shadow: 0 0 2px 1px #7f8c98;
}
.overflow {
  margin-left: 131px;
  width: 12px;
}
.overflow svg {
  width: 12px;
  height: 12px;
  margin-top: 4px;
}
.utility {
  display: flex;
  align-items: center;
  gap: 2px;
  height: 41px;
  margin-left: auto;
  padding-right: 6px;
}
.toggle {
  width: 33px;
  height: 33px;
  border: 2px solid #1276c8;
  background: #bfdcf4;
  box-shadow: inset 0 0 0 2px #eef8ff;
}
.mini-wheel {
  width: 22px;
  height: 22px;
  border: 1px solid #fff;
  border-radius: 50%;
  background: conic-gradient(#e86558 0 30deg, #f09045 30deg 90deg, #f7d04e 90deg 135deg, #5fd079 135deg 180deg, #5593e8 180deg 235deg, #9f57d8 235deg 300deg, #d85bd0 300deg 330deg, #e86558 330deg);
}
.utility .sep {
  margin: 0 4px 0 2px;
}
.help {
  width: 22px;
  height: 22px;
  margin-left: 8px;
  border-radius: 50%;
  background: #3a72b0;
  color: #fff;
  font-weight: bold;
}

/* toolbars */
.toolbar {
  display: flex;
  align-items: center;
  gap: 10px;
  height: 44px;
  padding-left: 10px;
}
.toolbar .sep {
  margin-left: -1px;
}
.options {
  display: flex;
  align-items: center;
  gap: 15px;
  height: 45px;
  padding: 0 0 0 14px;
  border-bottom: 1px solid #b4b4b4;
  white-space: nowrap;
}
.tool-label {
  width: 34px;
}
.drop {
  gap: 9px;
}
.drop + .drop {
  margin-left: -3px;
}
.blend span {
  width: 71px;
  margin-left: -3px;
  text-align: left;
}
.options .sep + .drop {
  margin-left: -5px;
}
.size-label {
  width: 90px;
}
.step {
  width: 14px;
  height: 14px;
  border: 1px solid #3f78b4;
  border-radius: 2px;
}
.step svg {
  width: 10px;
  height: 10px;
  stroke: #000;
  stroke-width: 2;
}
.combo {
  display: flex;
  align-items: center;
  width: 78px;
  height: 34px;
  padding: 0 8px 0 2px;
  border: 1px solid #7a7a7a;
  border-radius: 2px;
}
.combo input {
  width: 12px;
  height: 26px;
  background: #0078d7;
  color: #fff;
}
.combo button {
  margin-left: auto;
}
.hardness-label {
  width: 86px;
  margin-left: 3px;
}
.spacing-label {
  width: 75px;
  margin-left: 3px;
}
.fill-label {
  width: 26px;
}
.bar {
  position: relative;
  width: 263px;
  height: 31px;
  margin: 0 -2px;
  border: 2px solid #9c9c9c;
}
.bar input {
  display: block;
  appearance: none;
  width: 100%;
  height: 27px;
  background: linear-gradient(#0078d7, #0078d7) 0 0 / var(--value) 100% no-repeat;
}
.bar input::-webkit-slider-thumb {
  appearance: none;
  width: 1px;
  height: 27px;
}
.bar output {
  position: absolute;
  top: 2px;
  left: 4px;
  color: #fff;
  font-size: 17px;
}
.select {
  position: relative;
  margin-right: -5px;
}
.select select {
  display: block;
  appearance: none;
  width: 176px;
  height: 34px;
  padding: 0 5px;
  border: 1px solid #7a7a7a;
  border-radius: 2px;
}
.select .chevron {
  position: absolute;
  top: 13px;
  right: 7px;
}

/* drawing area */
.workspace {
  position: relative;
  flex: 1;
  min-height: 811px;
  padding-top: 4px;
  background: #cfcfcf;
}
.canvas {
  width: 56%;
  max-width: 1072px;
  height: 804px;
  margin: 0 auto;
  border: 1px solid #8a8a8a;
  background: #fff;
}
.cursor {
  position: absolute;
  right: 358px;
  bottom: 96px;
  width: 18px;
  height: 18px;
}

/* floating windows */
.panel {
  position: absolute;
  display: flex;
  flex-direction: column;
  border: 2px solid #a6a6a6;
  border-radius: 7px;
  background: #f0f0f0;
  box-shadow: 0 8px 18px rgba(0, 0, 0, .2);
}
.panel header {
  display: flex;
  align-items: flex-start;
  justify-content: space-between;
  height: 43px;
  padding: 8px 1px 0 11px;
  border-radius: 5px 5px 0 0;
  background: linear-gradient(90deg, #edf5f2, #f0f5ec);
}
.panel footer {
  display: flex;
  gap: 10px;
  height: 45px;
  padding: 10px 8px;
  border-top: 1px solid #dcdcdc;
  border-radius: 0 0 5px 5px;
  background: #fff;
}
.panel footer button {
  height: 24px;
}
.panel-body {
  flex: 1;
}
.close {
  width: 30px;
  height: 30px;
  background: #c75050;
  color: #fff;
  font-size: 15px;
  font-weight: bold;
}
.tools {
  top: 9px;
  left: 9px;
  width: 85px;
  height: 460px;
}
.tools header {
  background: #f2f5f2;
}
.tool-grid {
  display: grid;
  grid-template-columns: 40px 40px;
  grid-auto-rows: 40px;
  padding-left: 1px;
}
.tool-grid button {
  width: 38px;
  height: 38px;
  margin: 1px;
}
.tool-grid .active {
  border: 2px solid #1276c8;
  background: #b4d2ea;
  box-shadow: inset 0 0 0 2px #eef8ff;
}
.tool-grid .letter {
  color: #757575;
  font: bold 36px/38px "Liberation Serif", serif;
}
.tool-grid .shapes {
  grid-column: span 2;
  width: 78px;
}
.shapes svg {
  width: 52px;
  height: 30px;
}
.history {
  top: 9px;
  right: 9px;
  width: 288px;
  height: 420px;
}
.history-item {
  display: flex;
  align-items: center;
  gap: 4px;
  height: 30px;
  border: 2px solid #1276c8;
  background: #b4d2ea;
  box-shadow: inset 0 0 0 2px #eef8ff;
}
.history-item .icon {
  width: 22px;
}
.layers {
  right: 9px;
  bottom: 7px;
  width: 288px;
  height: 330px;
}
.layer {
  position: relative;
  display: flex;
  align-items: center;
  height: 93px;
  padding: 0 4px 0 6px;
  border: 2px solid #1276c8;
  background: #b4d2ea;
  box-shadow: inset 0 0 0 2px #eef8ff;
}
.thumb {
  width: 76px;
  height: 57px;
  margin-right: 9px;
  background: #fff;
  box-shadow: 0 0 2px 1px #7f8c98;
}
.layer input {
  appearance: none;
  width: 20px;
  height: 20px;
  margin-left: auto;
  border-radius: 3px;
  background: #005fb8;
}
.tick {
  position: absolute;
  right: 8px;
  width: 12px;
  height: 12px;
}

/* colors window */
.colors {
  bottom: -10px;
  left: 9px;
  width: 318px;
  height: 372px;
  z-index: 1;
}
.colors header {
  padding-top: 9px;
  background: linear-gradient(90deg, #fbf0ea, #f8f3e6 80%, #f3f4ed);
}
.colors-top {
  display: flex;
  justify-content: space-between;
  height: 55px;
  padding: 11px 14px 0 12px;
}
.swatches {
  position: relative;
  width: 80px;
  height: 80px;
}
.swatches button {
  position: absolute;
}
.primary, .secondary {
  width: 53px;
  height: 53px;
  border: 2px solid #000;
  background: #fff;
}
.secondary {
  top: 28px;
  left: 27px;
}
.primary {
  top: 1px;
  left: 0;
  background: #000;
  box-shadow: inset 0 0 0 2px #fff;
}
.primary::after {
  position: absolute;
  bottom: 2px;
  border: 6px solid transparent;
  border-top: 0;
  border-bottom: 9px solid #fff;
  content: "";
}
.reset {
  top: 58px;
  left: 0;
}
.reset svg {
  width: 22px;
  height: 22px;
}
.swap {
  top: 4px;
  left: 61px;
}
.swap svg {
  width: 16px;
  height: 16px;
}
.more {
  width: 110px;
  height: 32px;
  border: 1px solid #0067c0;
  border-radius: 4px;
  background: #fdfdfd;
}
.wheel {
  display: flex;
  align-items: center;
  justify-content: center;
  align-self: flex-end;
  width: 209px;
  height: 209px;
  margin-right: 17px;
  border-radius: 50%;
  background: radial-gradient(closest-side, #fff, transparent), conic-gradient(from 90deg, red, yellow, lime, cyan, blue, magenta, red);
}
.wheel i {
  width: 15px;
  height: 15px;
  border: 1px solid #000;
  border-radius: 50%;
  background: #fff;
}
.palette-tools {
  display: flex;
  gap: 10px;
  margin: -21px 0 12px 13px;
}
.palette {
  display: grid;
  grid-template-columns: repeat(16, 18px);
  grid-auto-rows: 18px;
  margin-left: 12px;
}

/* status bar */
.statusbar {
  display: flex;
  align-items: center;
  height: 33px;
  padding: 0 19px 0 2px;
  background: #f0f0f0;
  white-space: nowrap;
}
.hint {
  margin: 0 auto 0 0;
}
.info {
  display: flex;
  align-items: center;
  gap: 1px;
  width: 164px;
}
.position {
  width: 167px;
}
.unit {
  gap: 14px;
  margin-right: 13px;
}
.unit svg {
  width: 10px;
  height: 6px;
}
.percent {
  width: 55px;
}
.zoom-out {
  margin: 0 10px 0 16px;
}
.zoom-slider {
  position: relative;
  width: 134px;
  height: 24px;
  margin-right: 15px;
}
.zoom-slider input {
  display: block;
  appearance: none;
  width: 100%;
  height: 24px;
  background: linear-gradient(#777, #777) 0 50% / 100% 1px no-repeat;
}
.zoom-slider input::-webkit-slider-thumb {
  appearance: none;
  width: 14px;
  height: 24px;
}
.zoom-slider svg {
  position: absolute;
  top: 0;
  left: 60px;
  width: 14px;
  height: 24px;
}

/* windows taskbar */
.taskbar {
  display: flex;
  align-items: center;
  height: 72px;
  padding-bottom: 2px;
  border-top: 2px solid #484a4a;
  background: linear-gradient(90deg, #2b221f, #2c2419 10%, #22251f 19%, #242420 29%, #152635 34%, #1a2629 42%, #14283e 50%, #14283e 65%, #1f262b 72%, #262423 80%, #23241f);
  color: #fff;
}
.widget {
  gap: 14px;
  width: 378px;
  padding-left: 30px;
  justify-content: flex-start;
  text-align: left;
}
.ball {
  position: relative;
}
.ball svg {
  width: 33px;
  height: 33px;
}
.ball b {
  position: absolute;
  top: -12px;
  right: -7px;
  width: 24px;
  height: 24px;
  border-radius: 50%;
  background: #c42b1c;
  font-size: 15px;
  font-weight: normal;
  text-align: center;
}
.widget small {
  display: block;
  color: #cfcdca;
  font-size: 17px;
}
.apps {
  display: flex;
  margin-left: 30px;
}
.apps button {
  position: relative;
  width: 66px;
  height: 60px;
}
.apps svg {
  width: 36px;
  height: 36px;
}
.running::after, .current::after {
  position: absolute;
  bottom: 1px;
  width: 9px;
  height: 5px;
  border-radius: 3px;
  background: #9aa3ab;
  content: "";
}
.apps .current {
  width: 60px;
  margin-left: 3px;
  border: 1px solid #34414b;
  border-radius: 6px;
  background: #27333d;
}
.current::after {
  bottom: 0;
  width: 24px;
  background: #1591fb;
}
.avatar {
  position: absolute;
  top: 4px;
  right: 7px;
  width: 24px;
  border-radius: 50%;
  background: #2e6a1d;
  color: #dde8d8;
  font-size: 15px;
  font-weight: normal;
}
.logo {
  fill: #fff;
  font-size: 14px;
  font-weight: bold;
  text-anchor: middle;
}
.dvr {
  fill: #fff;
  font: bold 9px "Liberation Sans", sans-serif;
  text-anchor: middle;
}
.tray {
  display: flex;
  align-items: center;
  margin-left: auto;
  padding-right: 30px;
}
.tray svg {
  width: 24px;
  height: 24px;
  fill: none;
  stroke: #fff;
  stroke-width: 2;
}
.tray .solid {
  fill: #fff;
  stroke: none;
}
.tray .shade {
  fill: #aaa;
  stroke: none;
}
.tray .zz {
  stroke: #24241f;
}
.cloud {
  margin: 0 24px 0 22px;
}
.status {
  gap: 12px;
  margin: 0 12px 0 24px;
}
.clock {
  justify-content: flex-end;
  width: 106px;
  text-align: right;
}
.bell {
  margin-left: 12px;
}
```
